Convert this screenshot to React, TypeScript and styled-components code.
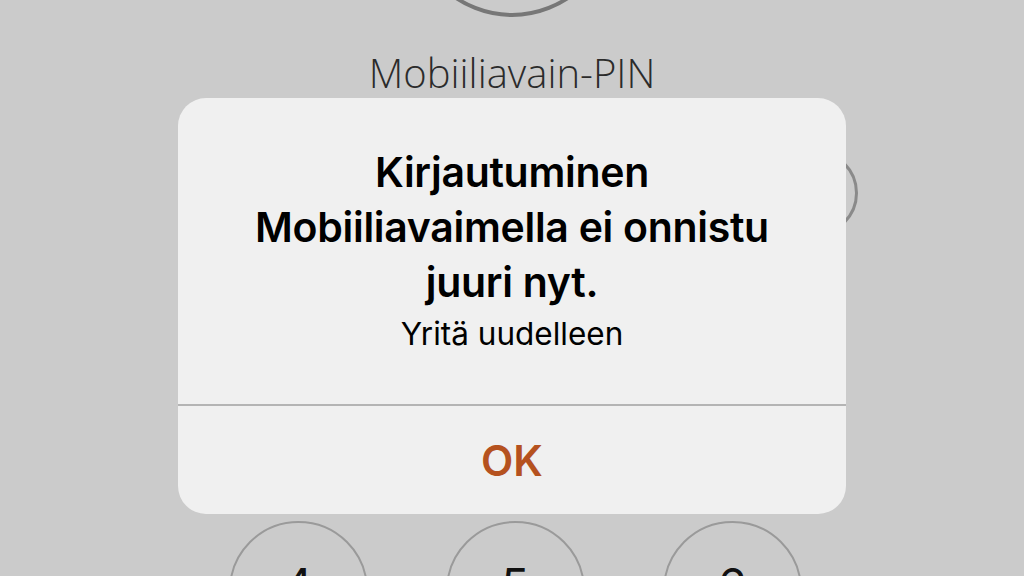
import React from "react";
import styled, { createGlobalStyle } from "styled-components";

const GlobalStyle = createGlobalStyle`
  html, body {
    margin: 0;
    padding: 0;
    background: #cbcbcb;
    overflow: hidden;
  }
  * { box-sizing: border-box; }
`;

const Screen = styled.div`
  position: relative;
  width: 1024px;
  height: 576px;
  overflow: hidden;
  background: #cbcbcb;
  display: flex;
  flex-direction: column;
  align-items: center;
`;

const Avatar = styled.div`
  flex: none;
  width: 204px;
  height: 204px;
  margin-top: -187px;
  border-radius: 50%;
  border: 4px solid #777777;
`;

const Label = styled.div`
  margin-top: 32px;
  font-family: "Open Sans", "DejaVu Sans", sans-serif;
  font-weight: 300;
  font-size: 40px;
  line-height: 48px;
  color: #2b2b2b;
`;

const PinRow = styled.div`
  width: 100%;
  display: flex;
  justify-content: flex-end;
  padding-right: 166px;
  margin-top: 53px;
`;

const PinButton = styled.div`
  width: 86px;
  height: 86px;
  border-radius: 50%;
  border: 3px solid #8a8a8a;
`;

const Keypad = styled.div`
  margin-top: 285px;
  display: grid;
  grid-template-columns: repeat(3, 139px);
  column-gap: 78px;
  margin-left: 6px;
`;

const Key = styled.div`
  width: 139px;
  height: 139px;
  border-radius: 50%;
  border: 2px solid #9a9a9a;
  display: flex;
  flex-direction: column;
  align-items: center;
  padding-top: 34px;
`;

const Digit = styled.span`
  font-family: Inter, "Liberation Sans", sans-serif;
  font-size: 46px;
  line-height: 56px;
  font-weight: 400;
  color: #111;
`;

const Letters = styled.span`
  font-family: Inter, "Liberation Sans", sans-serif;
  font-size: 14px;
  letter-spacing: 2px;
  color: #222;
`;

const Alert = styled.div`
  position: absolute;
  left: 178px;
  top: 98px;
  width: 668px;
  height: 416px;
  border-radius: 28px;
  background: #f0f0f0;
  display: flex;
  flex-direction: column;
  overflow: hidden;
`;

const AlertBody = styled.div`
  height: 306px;
  padding-top: 47px;
  display: flex;
  flex-direction: column;
  align-items: center;
  text-align: center;
`;

const Title = styled.div`
  font-family: Inter, "Liberation Sans", sans-serif;
  font-weight: 600;
  font-size: 41px;
  line-height: 55px;
  color: #000;
  letter-spacing: -0.3px;
`;

const Message = styled.div`
  margin-top: 4px;
  font-family: Inter, "Liberation Sans", sans-serif;
  font-weight: 400;
  font-size: 31.5px;
  line-height: 40px;
  color: #000;
`;

const Divider = styled.div`
  height: 2px;
  background: #b4b4b4;
`;

const ActionButton = styled.button`
  flex: 1;
  border: none;
  background: transparent;
  display: flex;
  align-items: center;
  justify-content: center;
  font-family: Inter, "Liberation Sans", sans-serif;
  font-weight: 600;
  font-size: 42px;
  color: #b5521f;
  padding: 0;
  cursor: pointer;
`;

const keys = [
  { d: "4", l: "GHI" },
  { d: "5", l: "JKL" },
  { d: "6", l: "MNO" },
];

export default function App() {
  return (
    <>
      <GlobalStyle />
      <Screen>
        <Avatar />
        <Label>Mobiiliavain-PIN</Label>
        <PinRow>
          <PinButton />
        </PinRow>
        <Keypad>
          {keys.map((k) => (
            <Key key={k.d}>
              <Digit>{k.d}</Digit>
              <Letters>{k.l}</Letters>
            </Key>
          ))}
        </Keypad>
        <Alert role="alertdialog">
          <AlertBody>
            <Title>
              Kirjautuminen
              <br />
              Mobiiliavaimella ei onnistu
              <br />
              juuri nyt.
            </Title>
            <Message>Yritä uudelleen</Message>
          </AlertBody>
          <Divider />
          <ActionButton>OK</ActionButton>
        </Alert>
      </Screen>
    </>
  );
}
